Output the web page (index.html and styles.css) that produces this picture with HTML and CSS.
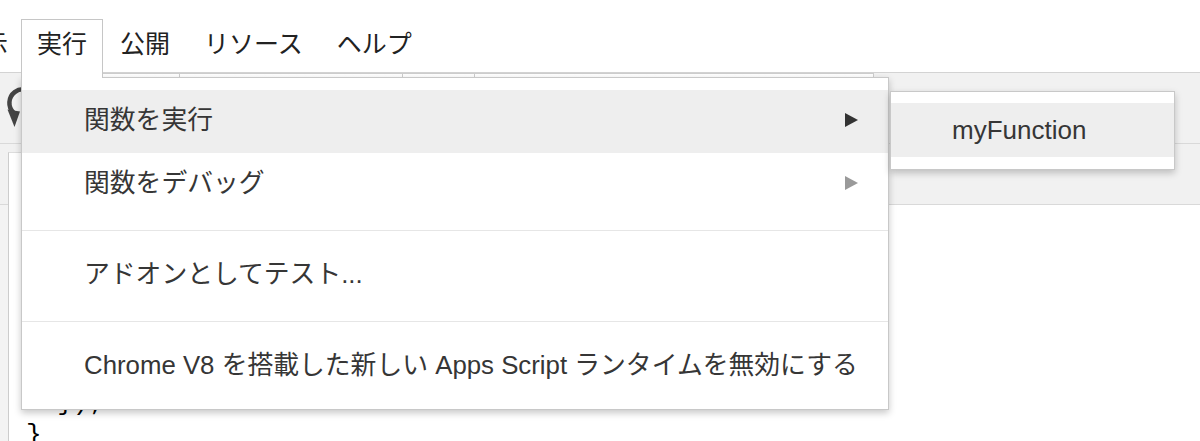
FILE: index.html
```html
<!DOCTYPE html>
<html lang="ja">
<head>
<meta charset="utf-8">
<title>Apps Script</title>
<link rel="stylesheet" href="styles.css">
</head>
<body>
<div class="menubar">
  <div class="mb-item mb-cut">表示</div>
  <div class="mb-item mb-active">実行</div>
  <div class="mb-item">公開</div>
  <div class="mb-item">リソース</div>
  <div class="mb-item">ヘルプ</div>
</div>
<div class="toolbar">
  <div class="tb-icon">
    <svg width="60" height="60" viewBox="0 0 60 60">
      <path d="M34.7 23.25 A13.5 13.5 0 1 0 13.5 39.5" fill="none" stroke="#444" stroke-width="4.5"/>
      <polygon points="7.5,36.5 20,38.5 14.5,54" fill="#444"/>
    </svg>
  </div>
  <div class="tb-btn b1"></div>
  <div class="tb-btn b2"></div>
  <div class="tb-btn b3"></div>
  <div class="tb-btn b4"></div>
</div>
<div class="tabstrip"><div class="filetab"></div></div>
<div class="workspace">
  <div class="gutter"></div>
  <div class="editor"><pre class="code">





  });
}</pre></div>
</div>

<div class="menu">
  <div class="menu-item active"><span class="label">関数を実行</span><svg class="arrow" width="13" height="14" viewBox="0 0 13 14"><polygon points="0,0 13,7 0,14" fill="#333"/></svg></div>
  <div class="menu-item"><span class="label">関数をデバッグ</span><svg class="arrow" width="13" height="14" viewBox="0 0 13 14"><polygon points="0,0 13,7 0,14" fill="#9a9a9a"/></svg></div>
  <div class="menu-sep"></div>
  <div class="menu-item"><span class="label">アドオンとしてテスト...</span></div>
  <div class="menu-sep"></div>
  <div class="menu-item"><span class="label">Chrome V8 を搭載した新しい Apps Script ランタイムを無効にする</span></div>
</div>
<div class="submenu">
  <div class="sub-item">myFunction</div>
</div>
</body>
</html>
```
FILE: styles.css
```css
html, body {
  margin: 0;
  padding: 0;
}
body {
  width: 1200px;
  height: 441px;
  overflow: hidden;
  background: #fff;
  font-family: "Liberation Sans", "Noto Sans CJK JP", sans-serif;
}

.menubar {
  display: flex;
  align-items: flex-start;
  box-sizing: border-box;
  height: 72px;
  padding-top: 19px;
  white-space: nowrap;
}
.mb-item {
  box-sizing: border-box;
  height: 53px;
  line-height: 50px;
  padding: 0 17px;
  font-size: 25px;
  color: #222;
}
.mb-cut {
  margin-left: -59px;
  padding-right: 13px;
}
.mb-active {
  position: relative;
  z-index: 5;
  height: 59px;
  padding: 0 15px;
  background: #fff;
  border: 1px solid #c6c6c6;
  border-bottom: none;
  line-height: 49px;
}

.toolbar {
  display: flex;
  align-items: flex-start;
  box-sizing: border-box;
  height: 72px;
  background: #f1f1f1;
  border-top: 1px solid #d3d3d3;
  border-bottom: 1px solid #d9d9d9;
}
.tb-icon {
  width: 60px;
  height: 60px;
  flex: none;
}
.tb-icon svg {
  display: block;
}
.tb-btn {
  box-sizing: border-box;
  height: 56px;
  margin-left: -1px;
  border: 1px solid #cdcdcd;
  background: linear-gradient(#ffffff, #f3f3f3);
  flex: none;
}
.b1 { width: 121px; }
.b2 { width: 224px; }
.b3 { width: 73px; }
.b4 { width: 400px; }

.tabstrip {
  box-sizing: border-box;
  height: 61px;
  background: #f1f1f1;
  border-bottom: 1px solid #d9d9d9;
  padding: 8px 0 0 8px;
}
.filetab {
  box-sizing: border-box;
  width: 240px;
  height: 53px;
  background: #fff;
  border-left: 1px solid #cccccc;
  border-top: 1px solid #dddddd;
  border-right: 1px solid #dddddd;
}

.workspace {
  display: flex;
  height: 236px;
}
.gutter {
  width: 8px;
  flex: none;
  background: #f3f3f3;
  border-right: 1px solid #cccccc;
}
.editor {
  flex: 1;
  background: #fff;
}
.code {
  margin: 0;
  padding: 22px 0 0 17px;
  font-family: "Liberation Mono", monospace;
  font-size: 26px;
  line-height: 32px;
  color: #000;
}

.menu {
  position: absolute;
  left: 21px;
  top: 77px;
  z-index: 4;
  box-sizing: border-box;
  width: 868px;
  padding: 12px 0 11px;
  background: #fff;
  border: 1px solid #c8c8c8;
  box-shadow: 0 3px 7px rgba(0, 0, 0, 0.22);
}
.menu-item {
  display: flex;
  align-items: center;
  justify-content: space-between;
  height: 63px;
  padding: 0 30px 0 62px;
  font-size: 25.8px;
  color: #363636;
  white-space: nowrap;
}
.menu-item .label {
  margin-bottom: 8px;
}
.menu-item.active {
  background: #eeeeee;
}
.arrow {
  display: block;
  flex: none;
  margin-bottom: 3px;
}
.menu-sep {
  height: 1px;
  margin: 14px 0 13px;
  background: #e6e6e6;
}

.submenu {
  position: absolute;
  left: 890px;
  top: 91px;
  z-index: 6;
  box-sizing: border-box;
  width: 285px;
  padding: 11px 0 12px;
  background: #fff;
  border: 1px solid #c8c8c8;
  box-shadow: 0 3px 7px rgba(0, 0, 0, 0.22);
}
.sub-item {
  height: 54px;
  line-height: 54px;
  padding-left: 61px;
  background: #eeeeee;
  font-size: 26px;
  color: #363636;
}
```
